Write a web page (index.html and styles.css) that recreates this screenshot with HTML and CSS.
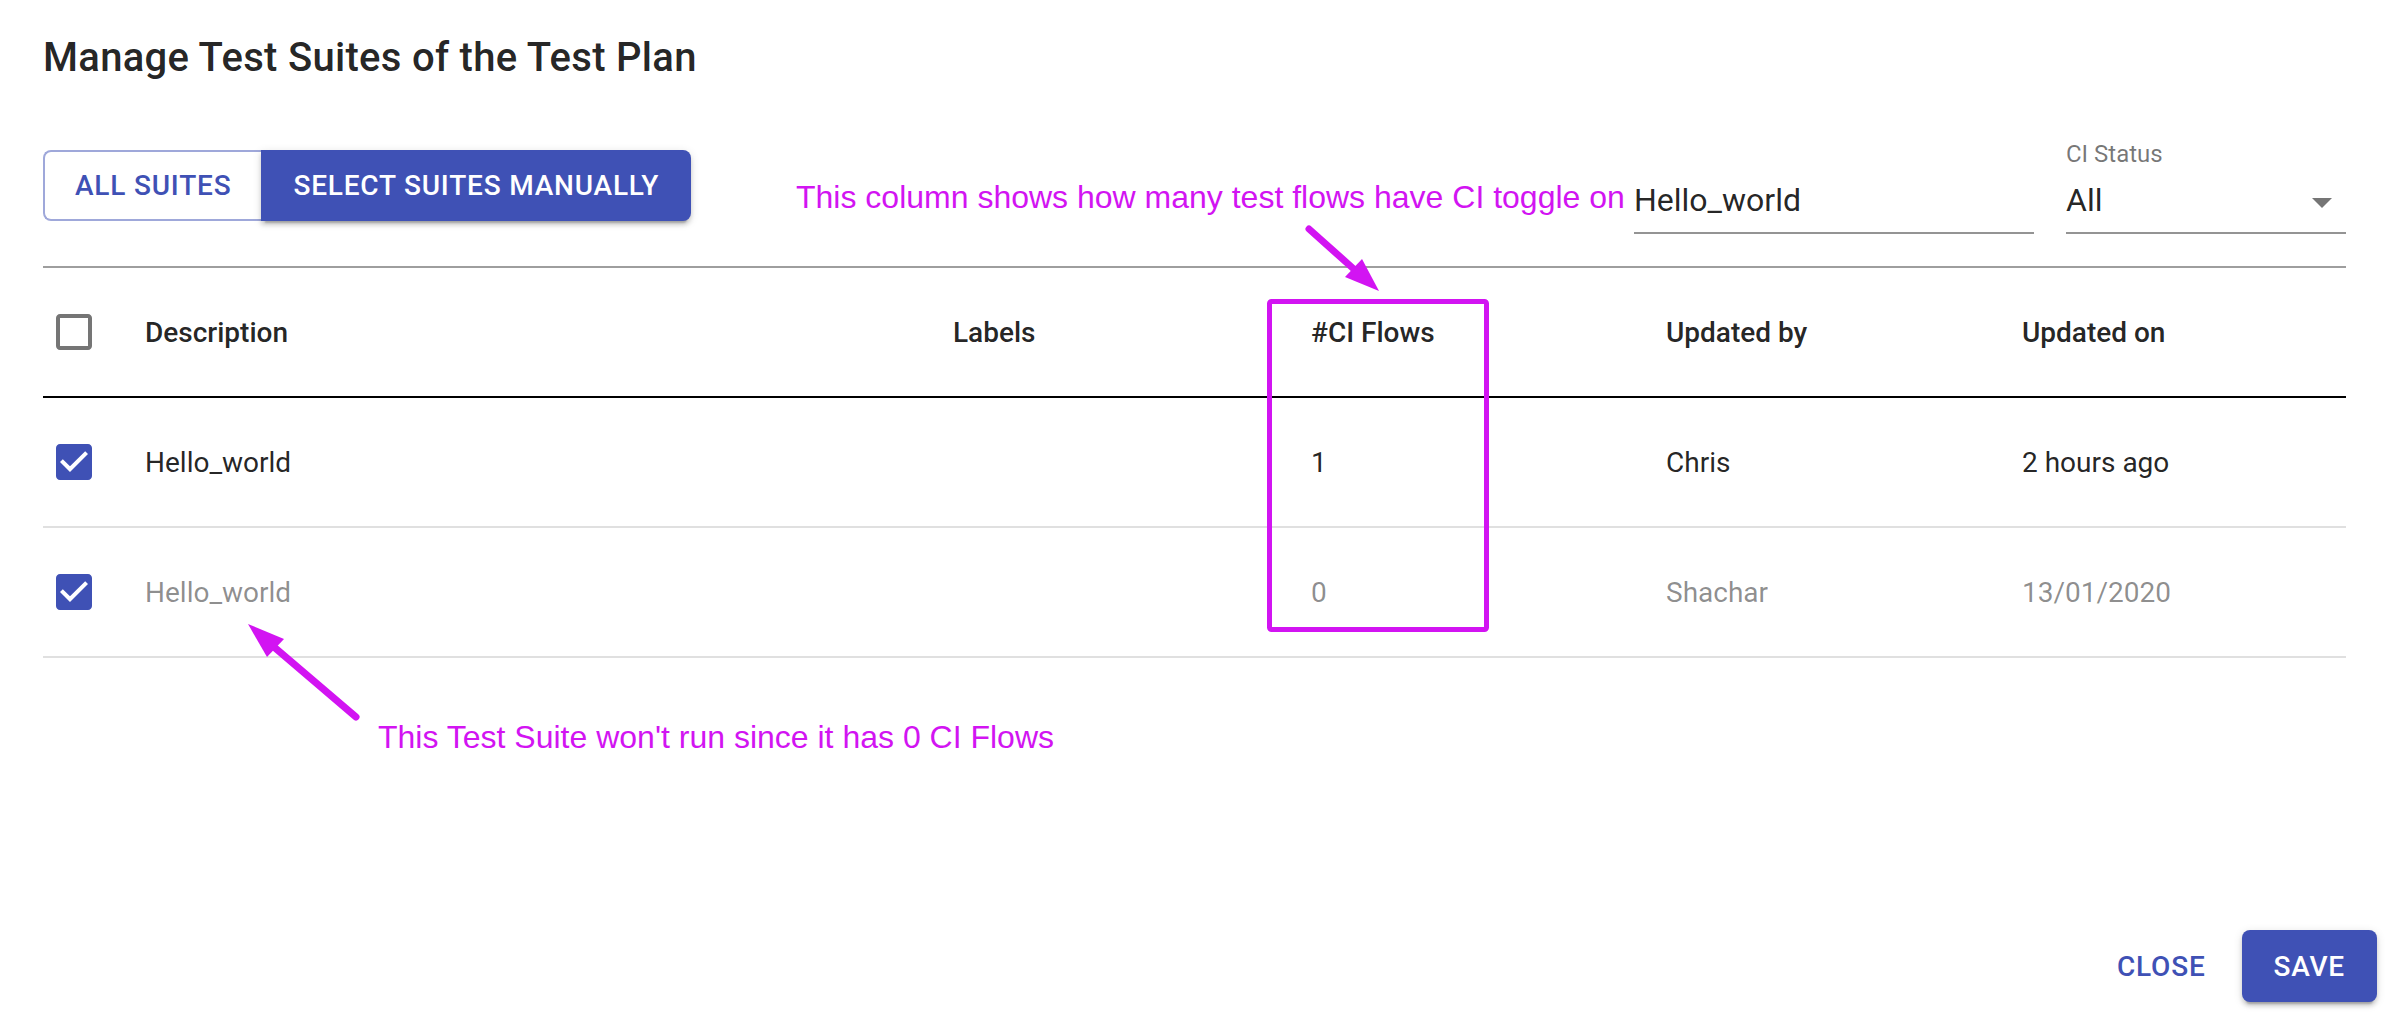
FILE: index.html
```html
<!DOCTYPE html>
<html>
<head>
<meta charset="utf-8">
<title>Manage Test Suites</title>
<link rel="stylesheet" href="styles.css">
</head>
<body>
<div class="dialog">
  <h2 class="title">Manage Test Suites of the Test Plan</h2>
  <div class="content">
    <div class="toolbar">
      <div class="btn-group">
        <button class="seg seg-outlined">All Suites</button>
        <button class="seg seg-contained">Select Suites Manually</button>
      </div>
      <div class="field search">
        <div class="input">Hello_world</div>
      </div>
      <div class="field select">
        <div class="label">CI Status</div>
        <div class="input">All
          <svg class="drop" viewBox="0 0 24 24" width="48" height="48"><path d="M7 10l5 5 5-5z"/></svg>
        </div>
      </div>
    </div>
    <div class="table">
      <div class="row head">
        <div class="cell check"><svg viewBox="0 0 24 24" width="48" height="48"><path class="cb-off" d="M19 5v14H5V5h14m0-2H5c-1.1 0-2 .9-2 2v14c0 1.1.9 2 2 2h14c1.1 0 2-.9 2-2V5c0-1.1-.9-2-2-2z"/></svg></div>
        <div class="cell">Description</div>
        <div class="cell">Labels</div>
        <div class="cell">#CI Flows</div>
        <div class="cell">Updated by</div>
        <div class="cell">Updated on</div>
      </div>
      <div class="row">
        <div class="cell check"><svg viewBox="0 0 24 24" width="48" height="48"><path class="cb-on" d="M19 3H5c-1.11 0-2 .9-2 2v14c0 1.1.89 2 2 2h14c1.11 0 2-.9 2-2V5c0-1.1-.89-2-2-2zm-9 14l-5-5 1.410-1.41L10 14.17l7.59-7.59L19 8l-9 9z"/></svg></div>
        <div class="cell">Hello_world</div>
        <div class="cell"></div>
        <div class="cell">1</div>
        <div class="cell">Chris</div>
        <div class="cell">2 hours ago</div>
      </div>
      <div class="row muted">
        <div class="cell check"><svg viewBox="0 0 24 24" width="48" height="48"><path class="cb-on" d="M19 3H5c-1.11 0-2 .9-2 2v14c0 1.1.89 2 2 2h14c1.11 0 2-.9 2-2V5c0-1.1-.89-2-2-2zm-9 14l-5-5 1.41-1.41L10 14.17l7.59-7.59L19 8l-9 9z"/></svg></div>
        <div class="cell">Hello_world</div>
        <div class="cell"></div>
        <div class="cell">0</div>
        <div class="cell">Shachar</div>
        <div class="cell">13/01/2020</div>
      </div>
    </div>
  </div>
  <div class="actions">
    <button class="text-btn">Close</button>
    <button class="save-btn">Save</button>
  </div>

  <div class="note note-top">This column shows how many test flows have CI toggle on</div>
  <div class="note note-bottom">This Test Suite won't run since it has 0 CI Flows</div>
  <svg class="overlay" width="2394" height="1016" viewBox="0 0 2394 1016">
    <rect x="1269.5" y="301.5" width="217" height="328" rx="2" class="mk-stroke" stroke-width="5" fill="none"/>
    <line x1="1309" y1="229" x2="1356" y2="271" class="mk-stroke" stroke-width="7" stroke-linecap="round"/>
    <polygon points="1379,291 1362,259 1345,277" class="mk-fill"/>
    <line x1="356" y1="717" x2="274" y2="647" class="mk-stroke" stroke-width="7" stroke-linecap="round"/>
    <polygon points="248,624 284,639 267,657" class="mk-fill"/>
  </svg>
</div>
</body>
</html>
```

FILE: styles.css
```css
html, body {
  margin: 0;
  padding: 0;
  background: #ffffff;
}

body {
  font-family: Roboto, "Noto Sans", "Liberation Sans", sans-serif;
  color: rgba(0, 0, 0, 0.87);
}

.dialog {
  position: relative;
  width: 2394px;
  height: 1016px;
  box-sizing: border-box;
  display: flex;
  flex-direction: column;
  overflow: hidden;
}

.title {
  margin: 0;
  padding: 26px 0 0 43px;
  font-size: 40px;
  line-height: 64px;
  font-weight: 500;
  letter-spacing: 0.3px;
  color: rgba(0, 0, 0, 0.87);
}

.content {
  padding: 0 48px 0 43px;
}

/* toolbar */
.toolbar {
  display: flex;
  align-items: flex-start;
  height: 176px;
  border-bottom: 2px solid #9e9e9e;
}

.btn-group {
  display: flex;
  margin-top: 60px;
}

.seg {
  font-family: Roboto, sans-serif;
  font-size: 28px;
  font-weight: 500;
  letter-spacing: 0.8px;
  text-transform: uppercase;
  height: 71px;
  box-sizing: border-box;
  cursor: pointer;
  margin: 0;
}

.seg-outlined {
  background: #fff;
  color: #3f51b5;
  border: 2px solid #9fa8da;
  border-right: none;
  border-radius: 8px 0 0 8px;
  padding: 0 30px;
}

.seg-contained {
  background: #3f51b5;
  color: #fff;
  border: none;
  border-radius: 0 8px 8px 0;
  padding: 0 32px;
  box-shadow: 0 6px 2px -4px rgba(0,0,0,0.2), 0 4px 4px 0 rgba(0,0,0,0.14), 0 2px 10px 0 rgba(0,0,0,0.12);
}

.field .input {
  font-size: 32px;
  line-height: 38px;
  padding: 13px 0 13px;
  border-bottom: 2px solid #949494;
  color: rgba(0, 0, 0, 0.87);
  position: relative;
}

.search {
  margin-left: auto;
  margin-top: 78px;
  width: 400px;
}

.select {
  margin-left: 32px;
  margin-top: 51px;
  width: 280px;
}

.select .label {
  font-size: 24px;
  line-height: 27px;
  color: rgba(0, 0, 0, 0.54);
}

.drop {
  position: absolute;
  right: 0;
  top: 10px;
  fill: rgba(0, 0, 0, 0.54);
}

/* table */
.row {
  display: grid;
  grid-template-columns: 102px 808px 358px 355px 356px 324px;
  align-items: center;
  height: 130px;
  box-sizing: border-box;
  border-bottom: 2px solid #e0e0e0;
  font-size: 28px;
  color: rgba(0, 0, 0, 0.87);
}

.row.head {
  border-bottom: 2px solid #000;
  font-weight: 500;
}

.row.muted {
  color: rgba(0, 0, 0, 0.45);
}

.cell.check {
  display: flex;
  align-items: center;
  padding-left: 7px;
}

.cell.check svg {
  display: block;
}

.cb-off {
  fill: #757575;
}

.cb-on {
  fill: #3f51b5;
}

/* actions */
.actions {
  margin-top: auto;
  display: flex;
  justify-content: flex-end;
  align-items: center;
  gap: 20px;
  padding: 0 17px 14px 0;
}

.text-btn,
.save-btn {
  font-family: Roboto, sans-serif;
  font-size: 28px;
  font-weight: 500;
  letter-spacing: 0.8px;
  text-transform: uppercase;
  height: 72px;
  border: none;
  margin: 0;
  cursor: pointer;
}

.text-btn {
  background: transparent;
  color: #3f51b5;
  padding: 0 16px;
}

.save-btn {
  background: #3f51b5;
  color: #fff;
  padding: 0 32px;
  min-width: 128px;
  border-radius: 8px;
  box-shadow: 0 6px 2px -4px rgba(0,0,0,0.2), 0 4px 4px 0 rgba(0,0,0,0.14), 0 2px 10px 0 rgba(0,0,0,0.12);
}

/* annotations */
.note {
  position: absolute;
  font-family: "Liberation Sans", Arial, sans-serif;
  font-size: 32px;
  line-height: 36px;
  color: #d214f2;
  white-space: nowrap;
}

.note-top {
  left: 796px;
  top: 179px;
}

.note-bottom {
  left: 378px;
  top: 719px;
}

.overlay {
  position: absolute;
  left: 0;
  top: 0;
  pointer-events: none;
}

.mk-stroke {
  stroke: #d214f2;
}

.mk-fill {
  fill: #d214f2;
}
```
